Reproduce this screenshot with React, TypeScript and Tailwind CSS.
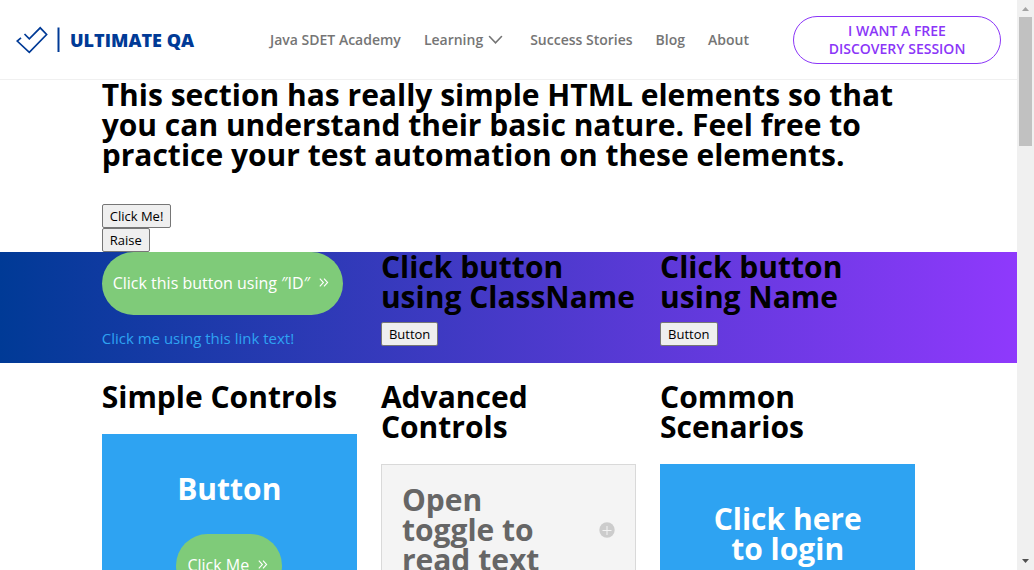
import React from "react";

const heading = "text-[30px] leading-[30px] font-bold";
const plainButton =
  "block h-6 rounded-[2px] border border-[#767676] bg-[#efefef] px-[7px] text-[13px] leading-[22px] text-black";

function Logo() {
  return (
    <a href="#home" aria-label="Ultimate QA" className="flex items-center text-[#003a96]">
      <svg width="44" height="30" viewBox="0 0 44 30" fill="none" stroke="currentColor" aria-hidden="true">
        <path
          strokeWidth="1.7"
          d="M5 12.8 L1.2 16 L13.3 27.4 L30.6 9.5 L24.2 2.8 L13.3 13.8 L8.5 9"
        />
        <path strokeWidth="2" d="M42.5 2.5 V27" />
      </svg>
      <span className="ml-[10px] font-['Open_Sans',sans-serif] text-[18px] leading-5 font-extrabold">
        ULTIMATE QA
      </span>
    </a>
  );
}

function Header() {
  return (
    <header className="flex h-20 items-center border-b border-[#f0f0f0] bg-white pr-4 pl-4">
      <Logo />
      <nav className="ml-auto flex items-center gap-[23px] text-[14px] font-semibold text-[#757575]">
        <a href="#academy">Java SDET Academy</a>
        <a href="#learning" className="flex items-center gap-[5px]">
          Learning
          <svg width="15" height="10" viewBox="0 0 15 10" fill="none" stroke="currentColor" strokeWidth="1.6" aria-hidden="true">
            <path d="M1.5 1.5 L7.5 7.8 L13.5 1.5" strokeLinecap="round" />
          </svg>
        </a>
        <a href="#stories" className="ml-[4px]">Success Stories</a>
        <a href="#blog">Blog</a>
        <a href="#about">About</a>
      </nav>
      <a
        href="#discovery"
        className="ml-11 flex h-12 w-52 items-center justify-center rounded-full border border-[#8b36f8] px-6 text-center text-[14px] leading-[18px] font-semibold text-[#8b36f8]"
      >
        I WANT A FREE DISCOVERY SESSION
      </a>
    </header>
  );
}

function Chevrons() {
  return (
    <svg width="10" height="11" viewBox="0 0 10 11" fill="none" stroke="currentColor" strokeWidth="1.1" aria-hidden="true">
      <path d="M0.8 1.7 L4.4 5.5 L0.8 9.3 M5 1.7 L8.6 5.5 L5 9.3" />
    </svg>
  );
}

function GreenButton({ children }: { children: React.ReactNode }) {
  return (
    <button className="inline-flex h-[63px] items-center gap-[9px] rounded-[32px] bg-[#7fcb79] pr-[14px] pb-[2px] pl-[11px] text-[16px] font-medium whitespace-nowrap text-white">
      {children}
      <Chevrons />
    </button>
  );
}

function ScrollBar() {
  return (
    <div className="flex w-[17px] shrink-0 flex-col items-center bg-[#f0f0f0]" aria-hidden="true">
      <svg width="17" height="17" viewBox="0 0 17 17" fill="#a3a3a3">
        <path d="M5 11 L8.5 7 L12 11 Z" />
      </svg>
      <div className="h-[129px] w-[13px] bg-[#c1c1c1]" />
      <svg width="17" height="17" viewBox="0 0 17 17" fill="#505050" className="mt-auto">
        <path d="M5 6 L8.5 10 L12 6 Z" />
      </svg>
    </div>
  );
}

export default function App() {
  return (
    <div className="flex h-screen overflow-hidden bg-white font-['Open_Sans',sans-serif] text-black">
      <div className="min-w-0 flex-1 overflow-hidden">
        <Header />
        <main>
          <section className="mx-auto w-4/5">
            <h2 className={heading}>
              This section has really simple HTML elements so that you can understand their basic nature. Feel free to
              practice your test automation on these elements.
            </h2>
            <div className="mt-[34px]">
              <button className={plainButton}>Click Me!</button>
              <button className={plainButton}>Raise</button>
            </div>
          </section>

          <section className="bg-linear-to-r/srgb from-[#003a96] to-[#8f39fc]">
            <div className="mx-auto grid w-4/5 grid-cols-3 gap-6">
              <div>
                <GreenButton>Click this button using ″ID″</GreenButton>
                <a href="#link" className="mt-[11px] mb-[13px] block text-[15px] leading-6 font-medium text-[#2ea3f2]">
                  Click me using this link text!
                </a>
              </div>
              <div>
                <h2 className={heading}>Click button using ClassName</h2>
                <button className={`${plainButton} mt-[10px]`}>Button</button>
              </div>
              <div>
                <h2 className={heading}>Click button using Name</h2>
                <button className={`${plainButton} mt-[10px]`}>Button</button>
              </div>
            </div>
          </section>

          <section className="mx-auto grid w-4/5 grid-cols-3 items-start gap-6 pt-[19px]">
            <div>
              <h2 className={heading}>Simple Controls</h2>
              <div className="mt-[22px] bg-[#2ea3f2] p-10 text-center">
                <h2 className={`${heading} mb-[30px] text-white`}>Button</h2>
                <GreenButton>Click Me</GreenButton>
              </div>
            </div>
            <div>
              <h2 className={heading}>Advanced Controls</h2>
              <div className="mt-[22px] border border-[#d9d9d9] bg-[#f4f4f4] p-5">
                <button className="flex w-full items-center justify-between text-left text-[#666666]">
                  <span className={`${heading} w-40`}>Open toggle to read text</span>
                  <svg width="16" height="16" viewBox="0 0 16 16" aria-hidden="true">
                    <circle cx="8" cy="8" r="7.7" fill="#cccccc" />
                    <path d="M3.5 8.5 H12.5 M8 4 V13" stroke="#f4f4f4" strokeWidth="1" />
                  </svg>
                </button>
              </div>
            </div>
            <div>
              <h2 className={heading}>Common Scenarios</h2>
              <div className="mt-[22px] bg-[#2ea3f2] p-10 text-center">
                <h2 className={`${heading} text-white`}>Click here to login</h2>
              </div>
            </div>
          </section>
        </main>
      </div>
      <ScrollBar />
    </div>
  );
}
